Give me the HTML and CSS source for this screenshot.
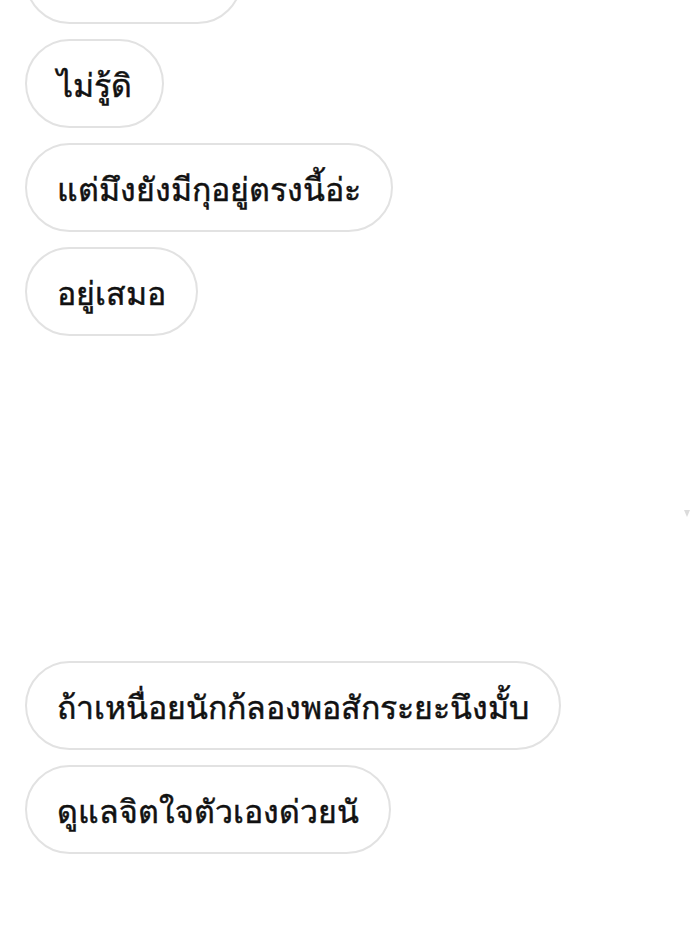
FILE: index.html
```html
<!DOCTYPE html>
<html lang="th">
<head>
  <meta charset="UTF-8">
  <meta name="viewport" content="width=device-width, initial-scale=1.0">
  <title>Chat</title>
  <link rel="stylesheet" href="styles.css">
</head>
<body>

  <!-- Message list -->
  <div class="chat">
    <div class="bubble cut">&nbsp;</div>
    <div class="bubble">ไม่รู้ดิ</div>
    <div class="bubble">แต่มึงยังมีกุอยู่ตรงนี้อ่ะ</div>
    <div class="bubble">อยู่เสมอ</div>

    <div class="gap">
      <span class="marker"></span>
    </div>

    <div class="bubble">ถ้าเหนื่อยนักก้ลองพอสักระยะนึงมั้บ</div>
    <div class="bubble">ดูแลจิตใจตัวเองด่วยนั</div>
  </div>

</body>
</html>
```

FILE: styles.css
```css
/* Global styling */
body { margin: 0; padding: 0; background-color: #fff; font-family: "Noto Sans", "DejaVu Sans", sans-serif; color: #111; }

/* Chat column */
.chat { display: flex; flex-direction: column; align-items: flex-start; gap: 15px; padding: 0 25px; margin-top: -65px; }
.bubble { box-sizing: border-box; height: 89px; display: flex; align-items: center; padding: 4px 30px 0; border: 2px solid #e2e2e2; border-radius: 45px; font-size: 32px; -webkit-text-stroke: 0.5px #111; white-space: nowrap; }
.bubble.cut { width: 217px; }

/* Empty stretch between the two groups */
.gap { align-self: stretch; height: 295px; display: flex; justify-content: flex-end; align-items: center; }
.marker { width: 0; height: 0; margin-right: -15px; margin-top: 30px; border-left: 3px solid transparent; border-right: 3px solid transparent; border-top: 7px solid #dcdcdc; }
```
